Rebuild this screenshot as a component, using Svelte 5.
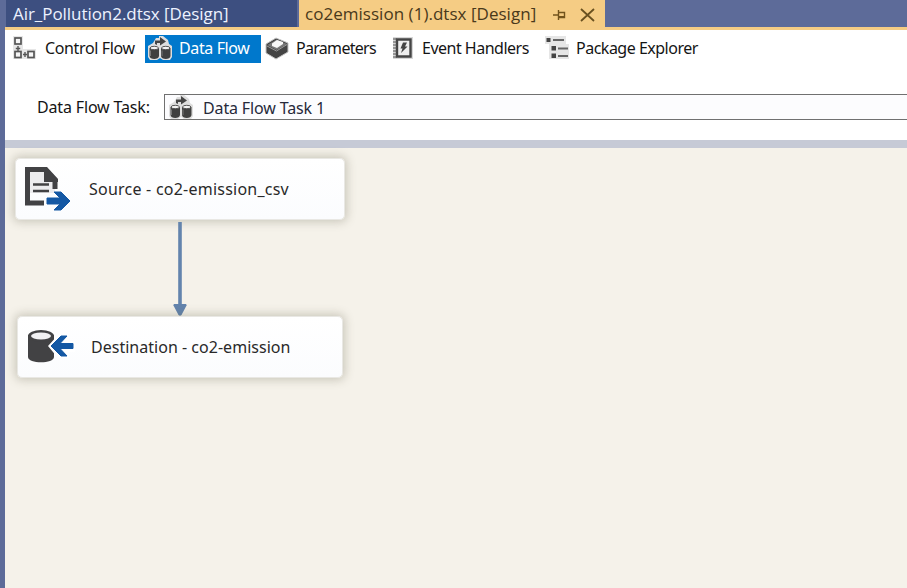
<script>
  const views = [
    { id: 'control', label: 'Control Flow' },
    { id: 'data', label: 'Data Flow' },
    { id: 'params', label: 'Parameters' },
    { id: 'events', label: 'Event Handlers' },
    { id: 'explorer', label: 'Package Explorer' }
  ];
</script>

{#snippet dataFlowIcon()}
  <svg width="24" height="24" viewBox="0 0 24 24">
    <path d="M5 7l3-5h3V0h4l5 4 1 4 3 2v11l-2 3h-7l-3-2-3 2H2l-2-3V10z" fill="#dedede" />
    <path d="M7 8V4.500h5V1l6 4.500-6 4V7H9v2z" fill="#454545" />
    <path d="M1.500 12v8c0 4 9.500 4 9.500 0v-8zM13 12v8c0 4 9.500 4 9.500 0v-8z" fill="#404040" />
    <path d="M2.500 14.500V20M14 14.500V20" stroke="#777" />
    <ellipse cx="6.250" cy="12" rx="4.200" ry="1.700" fill="#f3f3f3" stroke="#555" />
    <ellipse cx="17.750" cy="12" rx="4.200" ry="1.700" fill="#f3f3f3" stroke="#555" />
  </svg>
{/snippet}

<div class="window">
  <header class="tabs">
    <div class="tab"><span class="t1">Air_Pollution2.dtsx [Design]</span></div>
    <div class="tab active">
      <span class="t2">co2emission (1).dtsx [Design]</span>
      <svg class="pin" width="14" height="12" viewBox="0 0 14 12" fill="none" stroke="#72531c">
        <path d="M0 6h5M5.5 1v10M5.5 3.5h6v5h-6" stroke-width="1.4" /><path d="M5 8h7" stroke-width="2" />
      </svg>
      <svg class="close" width="15" height="14" viewBox="0 0 15 14"><path d="M1 1l13 12M14 1L1 13" stroke="#69501f" stroke-width="1.8" /></svg>
    </div>
  </header>
  <main>
    <nav>
      {#each views as v}
        <div class="view {v.id}">
          {#if v.id === 'control'}
            <svg width="24" height="24" viewBox="0 0 24 24" fill="#f6f6f6" stroke="#555" stroke-width="1.7">
              <path d="M0 0h10v13h13v10H0z" fill="#e6e6e6" stroke="none" />
              <rect x="2" y="2" width="6" height="6" /><rect x="2" y="15.5" width="6" height="6" /><rect x="15" y="15.5" width="6" height="6" />
              <path d="M5 10v5M2.8 12.5h4.4M10 18.5h4M12 16v5" stroke-width="1.4" />
            </svg>
          {:else if v.id === 'data'}
            {@render dataFlowIcon()}
          {:else if v.id === 'params'}
            <svg width="24" height="24" viewBox="0 0 24 24">
              <path d="M11 2L1 8v9l10 6 12-7V7z" fill="#444" stroke="#c4c4c4" />
              <path d="M11.5 3.500L2.500 9l9 5L22 8z" fill="#777" />
              <path d="M12 4L7 7.500V10l5 2 6-4V6z" fill="#f7f7f7" /><path d="M2 10l9.500 5L22 8.500" fill="none" stroke="#999" />
            </svg>
          {:else if v.id === 'events'}
            <svg width="22" height="24" viewBox="0 0 22 24">
              <path d="M1 1h20v22H1z" fill="#d7d7d7" /><path d="M5 3.5h13.5v17H5z" fill="#eee" stroke="#454545" stroke-width="2.4" />
              <path d="M1 3h4M1 6h4M1 9h4M1 12h4M1 15h4M1 18h4M1 21h4" stroke="#555" />
              <path d="M11 6.500h4l-2 4h2.500L9 17l1.500-4.500H8.500z" fill="#444" />
            </svg>
          {:else}
            <svg width="24" height="24" viewBox="0 0 24 24">
              <path d="M0 0h21v8h3v15H4V8H0z" fill="#e6e6e6" />
              <path d="M1.500 2h4v4h-4zM6.500 10h4.500v4.500H6.500zM6.500 17.500h4.500V22H6.500z" fill="#444" />
              <path d="M8 4h11M13 12.5h10M13 20h10" stroke="#666" stroke-width="2" />
            </svg>
          {/if}
          <span>{v.label}</span>
        </div>
      {/each}
    </nav>
    <div class="task">
      <span class="tasklabel">Data Flow Task:</span>
      <div class="combo">{@render dataFlowIcon()}<span>Data Flow Task 1</span></div>
    </div>
    <div class="divider"></div>
    <div class="canvas">
      <div class="node source">
        <svg width="48" height="48" viewBox="0 0 48 48">
          <path d="M3 3h19l9 10v14H3z" fill="#ececee" />
          <path d="M20 37H3.5V3.5H21L31 14v9" fill="none" stroke="#424244" stroke-width="5" />
          <path d="M20 1h3l11 12v3H20z" fill="#424244" /><path d="M9 18.500h16M9 25h16" stroke="#424244" stroke-width="2.6" />
          <path d="M23 32h13l-6-6h7l9 9-9 9h-7l6-6H23z" fill="#1458a4" stroke="#1458a4" />
        </svg>
        <span>Source - co2-emission_csv</span>
      </div>
      <svg class="link" width="16" height="96" viewBox="0 0 16 96"><path d="M8 0v84" stroke="#6384ad" stroke-width="3.6" /><path d="M2 82h12q1.500 1 0 2.500L9.500 93q-1.500 1.500-3 0L2 84.500Q.5 83 2 82z" fill="#6384ad" /></svg>
      <div class="node destination">
        <svg width="48" height="36" viewBox="0 0 48 36">
          <path d="M1 6v22c0 7 26 7 26 0V6z" fill="#424244" /><ellipse cx="14" cy="7" rx="13" ry="6" fill="#424244" /><ellipse cx="14" cy="7" rx="10" ry="3.5" fill="#f1f1f3" />
          <path d="M21 17l10-11h11v6h6v11h-6v6H31z" fill="#fff" />
          <path d="M24 17l10-10h6l-7 7.500h13v5H33l7 7.500h-6z" fill="#1458a4" stroke="#1458a4" />
        </svg>
        <span>Destination - co2-emission</span>
      </div>
    </div>
  </main>
</div>

<style>
  .window { width: 907px; height: 588px; background: #5d6b99; overflow: hidden; font: 16px 'Noto Sans', sans-serif; color: #151515; white-space: nowrap; display: flex; flex-direction: column; }
  svg { display: block; flex: none; }
  span { line-height: 22px; }
  .tabs { height: 27px; display: flex; gap: 2px; padding-left: 5px; flex: none; }
  .tab { width: 292px; background: #3d4f80; color: #edf2ff; box-sizing: border-box; font-family: 'Open Sans', sans-serif; font-size: 17px; display: flex; align-items: center; border-left: 1px solid #5d6b99; padding-left: 7px; }
  .active { width: 306px; background: #f5cc84; color: #49391b; padding-left: 6px; border-left: 0; }
  .tab span { flex: none; width: 216px; line-height: 26px; letter-spacing: -.05px; }
  .tab .t2 { width: 232px; letter-spacing: .03px; }
  .pin { margin: 3px 0 0 16px; }
  .close { margin: 2px 0 0 13px; }
  main { margin-left: 5px; flex: 1; background: #fff; border-top: 3px solid #f5cc84; display: flex; flex-direction: column; }
  nav { height: 38px; display: flex; align-items: center; flex: none; }
  nav svg { margin-bottom: 2px; }
  nav span { margin-bottom: 2px; }
  .view { height: 28px; display: flex; align-items: center; gap: 8px; box-sizing: border-box; flex: none; }
  .control { width: 140px; padding-left: 8px; letter-spacing: -.36px; }
  .data { width: 116px; padding-left: 3px; gap: 7px; background: #0078cc; color: #fff; letter-spacing: -.38px; }
  .params { width: 125px; padding-left: 4px; gap: 7px; letter-spacing: -.7px; }
  .events { width: 155px; padding-left: 6px; gap: 8px; letter-spacing: -.5px; }
  .explorer { padding-left: 4px; gap: 7px; letter-spacing: -.5px; }
  .task { height: 72px; display: flex; align-items: center; flex: none; padding-left: 32px; box-sizing: border-box; }
  .tasklabel { width: 127px; margin-top: 5px; letter-spacing: -.16px; }
  .combo { flex: 1; height: 26px; margin-top: 6px; box-sizing: border-box; border: 1px solid #707070; border-right: 0; display: flex; align-items: center; gap: 10px; padding-left: 4px; color: #26293a; background: #fcfcfe; letter-spacing: -.14px; }
  .combo span { margin-top: 2px; }
  .divider { height: 8px; background: #c6cad6; flex: none; }
  .canvas { flex: 1; background: #f5f2ea; display: flex; flex-direction: column; align-items: flex-start; padding: 10px; }
  .node { width: 330px; height: 62px; box-sizing: border-box; border: 1px solid #e9e8e4; border-radius: 5px; background: linear-gradient(#fff, #fbfcfe); box-shadow: 0 0 10px 2px rgba(90, 85, 65, .28); display: flex; align-items: center; color: #292929; }
  .source { padding-left: 8px; gap: 17px; letter-spacing: .23px; }
  .source svg { margin-top: 2px; }
  .link { margin: 2px 0 -2px 157px; }
  .destination { width: 326px; margin-left: 2px; padding-left: 9px; gap: 16px; letter-spacing: .02px; }
</style>
